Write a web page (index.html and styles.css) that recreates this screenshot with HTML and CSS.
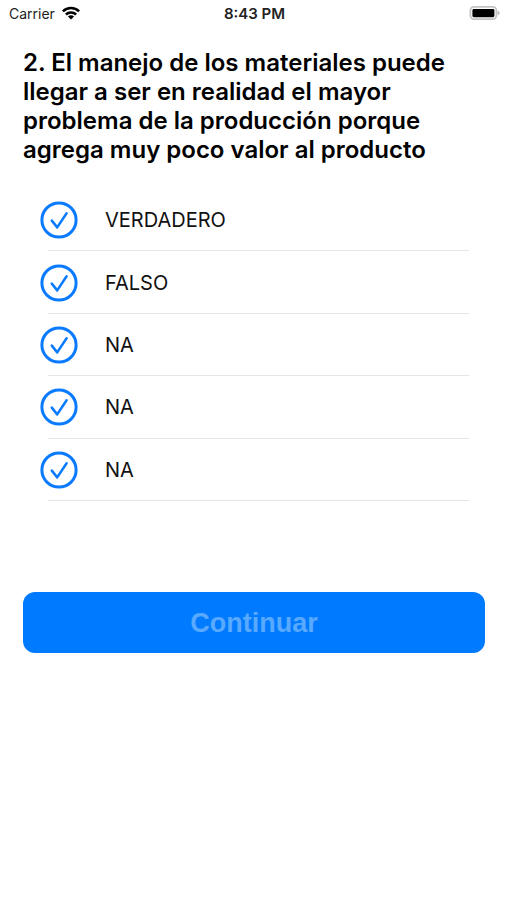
FILE: index.html
```html
<!DOCTYPE html>
<html lang="es">
<head>
<meta charset="utf-8">
<meta name="viewport" content="width=device-width, initial-scale=1">
<title>Cuestionario</title>
<link rel="stylesheet" href="styles.css">
</head>
<body>
<svg class="symbols" aria-hidden="true">
  <symbol id="check-circle" viewBox="0 0 38 38">
    <g fill="none" stroke="currentColor" stroke-linecap="round" stroke-linejoin="round">
      <circle cx="19" cy="19" r="17.1" stroke-width="3"/>
      <path d="M11.8 19.6 L17.2 26.4 L26.6 12.2" stroke-width="2.5"/>
    </g>
  </symbol>
</svg>
<header class="status">
  <div class="carrier">
    <span>Carrier</span>
    <svg class="wifi" viewBox="0 0 18 14" aria-hidden="true">
      <g fill="none" stroke="currentColor" stroke-width="2.5">
        <path d="M0.9 5.3 A11.4 11.4 0 0 1 17.1 5.3"/>
        <path d="M3.9 8.5 A7.2 7.2 0 0 1 14.1 8.5"/>
      </g>
      <path d="M5.9 10.5 A4.4 4.4 0 0 1 12.1 10.5 L9 13.6 Z" fill="currentColor"/>
    </svg>
  </div>
  <time class="clock">8:43 PM</time>
  <svg class="battery" viewBox="0 0 31 14" aria-hidden="true">
    <rect x="1.4" y="0.9" width="26" height="12.2" rx="3.6" fill="#fff" stroke="#c4c4c4" stroke-width="1.8"/>
    <rect x="3.4" y="3" width="22" height="8.2" rx="1.4" fill="#000"/>
    <path d="M28.7 4.8 Q30.6 5.4 30.6 7 Q30.6 8.6 28.7 9.2 Z" fill="#b3b3b3"/>
  </svg>
</header>
<main class="quiz">
  <h1 class="question">2. El manejo de los materiales puede llegar a ser en realidad el mayor problema de la producción porque agrega muy poco valor al producto</h1>
  <ul class="options">
    <li class="row"><button class="option" type="button"><svg class="check" aria-hidden="true"><use href="#check-circle"/></svg><span>VERDADERO</span></button></li>
    <li class="row"><button class="option" type="button"><svg class="check" aria-hidden="true"><use href="#check-circle"/></svg><span>FALSO</span></button></li>
    <li class="row"><button class="option" type="button"><svg class="check" aria-hidden="true"><use href="#check-circle"/></svg><span>NA</span></button></li>
    <li class="row"><button class="option" type="button"><svg class="check" aria-hidden="true"><use href="#check-circle"/></svg><span>NA</span></button></li>
    <li class="row"><button class="option" type="button"><svg class="check" aria-hidden="true"><use href="#check-circle"/></svg><span>NA</span></button></li>
  </ul>
  <button class="continue" type="button" disabled>Continuar</button>
</main>
</body>
</html>
```
FILE: styles.css
```css
* {
  box-sizing: border-box;
}

body {
  margin: 0;
  min-height: 100vh;
  background: #fff;
  color: #000;
  font-family: Inter, "Liberation Sans", sans-serif;
}

.symbols {
  display: none;
}

.status {
  display: grid;
  grid-template-columns: 1fr auto 1fr;
  align-items: center;
  height: 26px;
  padding: 0 7px 0 9px;
  font-size: 14px;
  color: #222;
}

.carrier {
  display: flex;
  align-items: center;
  gap: 7px;
}

.wifi {
  width: 18px;
  height: 14px;
  color: #000;
}

.clock {
  font-size: 15px;
  font-weight: 600;
}

.battery {
  justify-self: end;
  width: 31px;
  height: 14px;
}

.quiz {
  padding: 22px 22px 24px 23px;
}

.question {
  margin: 0;
  padding-right: 32px;
  font-size: 24px;
  font-weight: 600;
  line-height: 29px;
}

.options {
  display: grid;
  grid-auto-rows: 1fr;
  min-height: 312px;
  margin: 25px 16px 0 17px;
  padding: 0;
  list-style: none;
}

.row {
  display: flex;
  background: linear-gradient(#e6e6e6, #e6e6e6) 8px 100% / 100% 1px no-repeat;
}

.option {
  display: flex;
  flex: 1;
  align-items: center;
  gap: 27px;
  padding: 0;
  border: 0;
  background: none;
  color: #111;
  font: 20px/24px Inter, "Liberation Sans", sans-serif;
  text-align: left;
}

.check {
  flex: none;
  width: 38px;
  height: 38px;
  color: #0a7aff;
}

.continue {
  display: block;
  width: 100%;
  height: 61px;
  margin-top: 91px;
  border: 0;
  border-radius: 12px;
  background: #007aff;
  color: #59a9ff;
  font: bold 27px/32px "Liberation Sans", Arial, sans-serif;
}
```
